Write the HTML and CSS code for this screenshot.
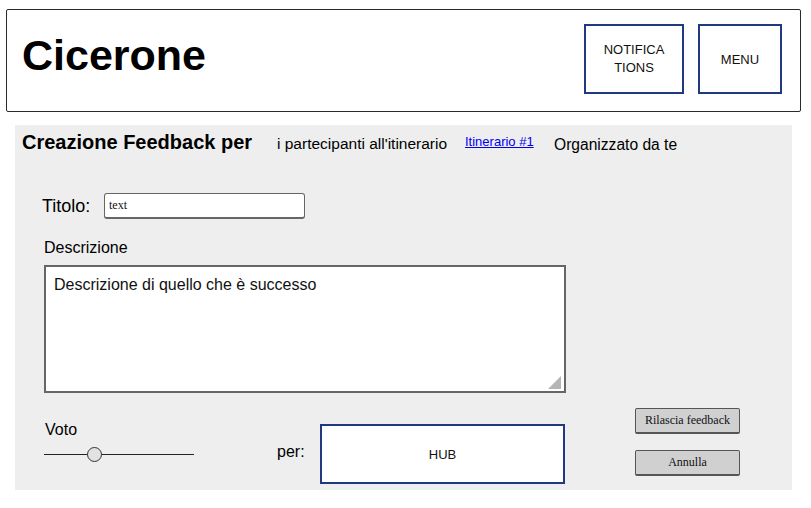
FILE: index.html
```html
<!DOCTYPE html>
<html lang="it">
<head>
<meta charset="utf-8">
<title>Cicerone - Creazione Feedback</title>
<link rel="stylesheet" href="styles.css">
</head>
<body>
<header class="topbar">
  <h1 class="brand">Cicerone</h1>
  <nav class="topnav">
    <button class="navbox notif">NOTIFICA<br>TIONS</button>
    <button class="navbox menu">MENU</button>
  </nav>
</header>
<main class="panel">
  <div class="title-row">
    <h2 class="title">Creazione Feedback per</h2>
    <span class="sub">i partecipanti all'itinerario</span>
    <a class="itin" href="#">Itinerario #1</a>
    <span class="org">Organizzato da te</span>
  </div>
  <div class="field-row">
    <label class="titolo-label">Titolo:</label>
    <div class="text-input">text</div>
  </div>
  <div class="desc-label">Descrizione</div>
  <div class="desc-box">
    <span class="desc-text">Descrizione di quello che è successo</span>
    <span class="grip"></span>
  </div>
  <div class="bottom-row">
    <div class="voto">
      <div class="voto-label">Voto</div>
      <div class="slider"><span class="thumb"></span></div>
    </div>
    <div class="per">per:</div>
    <div class="hub">HUB</div>
    <div class="actions">
      <button class="btn">Rilascia feedback</button>
      <button class="btn">Annulla</button>
    </div>
  </div>
</main>
</body>
</html>
```
FILE: styles.css
```css
* { box-sizing: border-box; }
body {
  margin: 0;
  background: #ffffff;
  font-family: "Liberation Sans", Arial, sans-serif;
  color: #000;
}
.topbar {
  margin: 9px 0 0 6px;
  width: 795px;
  height: 103px;
  border: 1px solid #2a2a2a;
  border-radius: 2px;
  background: #fff;
  display: flex;
  align-items: center;
  justify-content: space-between;
  padding: 0 18px 0 15px;
}
.brand {
  margin: 0;
  font-size: 43px;
  font-weight: bold;
  line-height: 1;
  margin-top: -11px;
}
.topnav {
  display: flex;
  gap: 14px;
  margin-top: -3px;
}
.navbox {
  height: 70px;
  border: 2px solid #1f3a80;
  background: #fff;
  font-family: "Liberation Sans", Arial, sans-serif;
  font-size: 13px;
  line-height: 18px;
  color: #111;
  padding: 0;
  text-align: center;
}
.notif { width: 100px; }
.menu { width: 84px; padding-top: 1px; }

.panel {
  margin: 13px 0 0 15px;
  width: 777px;
  height: 365px;
  background: #eeeeee;
  display: flex;
  flex-direction: column;
  align-items: flex-start;
}
.title-row {
  display: flex;
  align-items: flex-start;
  height: 40px;
  padding-left: 7px;
}
.title {
  margin: 7px 0 0;
  width: 255px;
  font-size: 20px;
  font-weight: bold;
  line-height: 1;
}
.sub {
  margin-top: 11px;
  width: 188px;
  font-size: 15.5px;
  line-height: 1;
}
.itin {
  margin-top: 10px;
  width: 89px;
  font-size: 13px;
  line-height: 1;
  color: #0000ee;
}
.org {
  margin-top: 12px;
  font-size: 15.6px;
  line-height: 1;
}
.field-row {
  display: flex;
  align-items: center;
  margin-top: 28px;
  padding-left: 27px;
  height: 26px;
}
.titolo-label {
  width: 62px;
  font-size: 18px;
  line-height: 1;
}
.text-input {
  width: 201px;
  height: 26px;
  background: #fff;
  border: 1px solid #666;
  border-bottom-width: 2px;
  border-radius: 3px;
  font-family: "Liberation Serif", "Times New Roman", serif;
  font-size: 12px;
  line-height: 22px;
  padding-left: 4px;
  color: #111;
}
.desc-label {
  margin: 21px 0 0 29px;
  font-size: 16px;
  line-height: 1;
  height: 16px;
}
.desc-box {
  position: relative;
  margin: 9px 0 0 29px;
  width: 522px;
  height: 128px;
  background: #fff;
  border: 2px solid #666;
  padding: 9px 0 0 8px;
}
.desc-text {
  font-size: 16px;
  line-height: 1;
  color: #111;
}
.grip {
  position: absolute;
  right: 3px;
  bottom: 2px;
  width: 0;
  height: 0;
  border-style: solid;
  border-width: 0 0 13px 13px;
  border-color: transparent transparent #b5b5b5 transparent;
}
.bottom-row {
  display: flex;
  align-items: flex-start;
}
.voto {
  margin: 29px 0 0 29px;
  width: 150px;
}
.voto-label {
  padding-left: 1px;
  font-size: 16px;
  line-height: 1;
  height: 16px;
}
.slider {
  position: relative;
  margin-top: 9px;
  height: 16px;
}
.slider::before {
  content: "";
  position: absolute;
  left: 0;
  right: 0;
  top: 7px;
  height: 1px;
  background: #222;
}
.thumb {
  position: absolute;
  left: 43px;
  top: 0;
  width: 15px;
  height: 15px;
  border-radius: 50%;
  border: 1px solid #333;
  background: #e2e2e2;
}
.per {
  margin: 51px 0 0 83px;
  width: 43px;
  font-size: 16px;
  line-height: 1;
}
.hub {
  margin-top: 31px;
  width: 245px;
  height: 60px;
  background: #fff;
  border: 2px solid #1f3a80;
  display: flex;
  align-items: center;
  justify-content: center;
  font-size: 13px;
  color: #111;
}
.actions {
  margin: 15px 0 0 70px;
  display: flex;
  flex-direction: column;
  gap: 16px;
}
.btn {
  width: 105px;
  height: 26px;
  background: #d0d0d0;
  border: 1px solid #555;
  border-bottom-width: 2px;
  border-radius: 2px;
  font-family: "Liberation Serif", "Times New Roman", serif;
  font-size: 12px;
  color: #111;
  padding: 0;
}
```
